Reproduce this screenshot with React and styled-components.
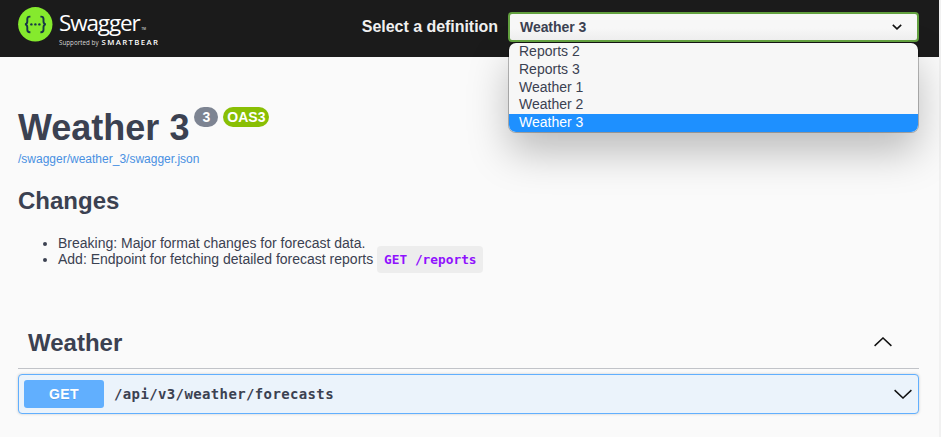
import React from 'react';
import styled, { createGlobalStyle, css } from 'styled-components';

const GlobalStyle = createGlobalStyle`
  * { box-sizing: border-box; }
  html, body { margin: 0; padding: 0; overflow: hidden; }
  body {
    background: #fafafa;
    color: #3b4151;
    font-family: 'Liberation Sans', Arial, sans-serif;
    font-size: 14px;
  }
`;

const Page = styled.div`
  height: 437px;
  background: #fafafa;
  border-right: 2px solid #f1f1f1;
`;

const Topbar = styled.header`
  display: flex;
  justify-content: space-between;
  height: 57px;
  padding: 0 20px 0 18px;
  background: #1b1b1b;
`;

const Brand = styled.a`
  display: flex;
  gap: 6px;
  padding-top: 7px;
  color: #fff;
  font-family: 'Open Sans', sans-serif;
`;

const Wordmark = styled.div`
  display: flex;
  flex-direction: column;
  padding-top: 1px;
`;

const BrandName = styled.div`
  display: flex;
  align-items: flex-end;
  height: 30px;
  font-size: 22.5px;
  line-height: 30px;
  letter-spacing: -1.15px;
`;

const Trademark = styled.span`
  font-size: 3px;
  line-height: 17px;
  letter-spacing: 0;
  margin-left: 2px;
`;

const Supported = styled.div`
  display: flex;
  align-items: baseline;
  gap: 3px;
  color: #d8d8d8;
  font-size: 6.2px;
  line-height: 9px;
  letter-spacing: 0.05px;
  white-space: nowrap;
`;

const Company = styled.span`
  color: #fff;
  font-weight: 600;
  font-size: 7.8px;
  letter-spacing: 1.35px;
`;

const Definition = styled.div`
  display: flex;
  align-items: flex-start;
  gap: 10px;
  padding-top: 12px;
`;

const DefinitionLabel = styled.span`
  color: #f0f0f0;
  font-size: 16px;
  font-weight: 700;
  line-height: 29px;
  letter-spacing: -0.04px;
`;

const Picker = styled.div`
  position: relative;
  width: 411px;
`;

const PickerField = styled.div`
  display: flex;
  align-items: center;
  justify-content: space-between;
  position: relative;
  height: 30px;
  padding: 0 15px 0 10px;
  border: 2px solid #62a03f;
  border-radius: 4px;
  background: linear-gradient(#f7f7f7 55%, #eeeeee);
  font-weight: 700;
  letter-spacing: -0.06px;
`;

const Menu = styled.div`
  position: absolute;
  top: 31px;
  left: 1px;
  width: 409px;
  height: 89px;
  border-radius: 7px;
  overflow: hidden;
  background: #f7f7f7;
`;

const MenuShadow = styled.div`
  position: absolute;
  top: 31px;
  left: 1px;
  width: 409px;
  height: 89px;
  border-radius: 7px;
  box-shadow: 0 0 0 1px rgba(0, 0, 0, 0.25), 0 20px 40px 0 rgba(0, 0, 0, 0.25);
`;

const Option = styled.div`
  height: ${(p) => p.$height}px;
  padding-left: 10px;
  line-height: ${(p) => p.$line}px;
  ${(p) => p.$active && css`
    background: #1e90ff;
    color: #fff;
  `}
`;

const Content = styled.main`
  padding: 0 20px 0 18px;
`;

const TitleRow = styled.div`
  display: flex;
  align-items: flex-start;
  padding-top: 50px;
  height: 92px;
`;

const Title = styled.h1`
  margin: 0;
  font-size: 36px;
  line-height: 41px;
`;

const Badge = styled.span`
  height: 20px;
  width: ${(p) => p.$width}px;
  margin-left: 5px;
  border-radius: 57px;
  background: ${(p) => p.$color};
  color: #fff;
  font-size: 14px;
  font-weight: 700;
  line-height: 20px;
  text-align: center;
`;

const SpecLink = styled.a`
  display: block;
  height: 20px;
  color: #4990e2;
  font-size: 12px;
  line-height: 20px;
`;

const Heading = styled.h2`
  margin: 0;
  font-size: 24px;
  line-height: 28px;
`;

const Changes = styled.section`
  padding-top: 18px;
  height: 153px;
`;

const ChangeList = styled.ul`
  margin: 20px 0 0;
  padding-left: 40px;
`;

const Change = styled.li`
  height: 16px;
  line-height: 16px;
  white-space: nowrap;
`;

const Code = styled.code`
  display: inline-block;
  width: 106px;
  height: 27px;
  margin: -6px 0 -5px;
  padding: 0 7px;
  border-radius: 4px;
  background: #ededed;
  color: #9012fe;
  font-family: 'DejaVu Sans Mono', monospace;
  font-size: 12.8px;
  font-weight: 700;
  line-height: 27px;
  vertical-align: middle;
`;

const TagHeader = styled.div`
  display: flex;
  align-items: center;
  justify-content: space-between;
  height: 47px;
  padding: 0 26px 5px 10px;
  border-bottom: 1px solid #c1c3c8;

  svg { margin-bottom: 2px; }
`;

const Operation = styled.div`
  display: flex;
  align-items: center;
  height: 40px;
  margin: 5px 0 0;
  padding: 0 5px;
  border: 1px solid #61affe;
  border-radius: 4px;
  background: #ebf3fb;
  box-shadow: 0 0 3px rgba(0, 0, 0, 0.19);
`;

const Method = styled.span`
  width: 80px;
  height: 28px;
  border-radius: 3px;
  background: #61affe;
  color: #fff;
  font-weight: 700;
  line-height: 28px;
  letter-spacing: 0.4px;
  text-align: center;
  text-shadow: 0 1px 0 rgba(0, 0, 0, 0.1);
`;

const Path = styled.span`
  flex: 1;
  padding-left: 10px;
  font-family: 'DejaVu Sans Mono', monospace;
  font-size: 14px;
  line-height: 16px;
  letter-spacing: 0.37px;
  font-weight: 700;
`;

function SwaggerLogo() {
  return (
    <svg width="35" height="35" viewBox="0 0 35 35">
      <circle cx="17.3" cy="17.3" r="17.2" fill="#85ea2d" />
      <g fill="none" stroke="#173647" strokeWidth="1.9">
        <path d="M12.4 9.6h-.7c-1.8 0-2.4.8-2.4 2.4v2.6c0 1.6-.7 2.6-2.3 2.8 1.6.2 2.3 1.2 2.3 2.8v2.6c0 1.6.6 2.4 2.4 2.4h.7" />
        <path d="M22.4 9.6h.7c1.8 0 2.4.8 2.4 2.4v2.6c0 1.6.7 2.6 2.3 2.8-1.6.2-2.3 1.2-2.3 2.8v2.6c0 1.6-.6 2.4-2.4 2.4h-.7" />
      </g>
      <g fill="#173647">
        <circle cx="13.4" cy="17.4" r="1.2" />
        <circle cx="17.4" cy="17.4" r="1.2" />
        <circle cx="21.4" cy="17.4" r="1.2" />
      </g>
    </svg>
  );
}

const arrows = {
  small: { w: 10, h: 6, d: 'M.8.9 5 4.8 9.2.9', stroke: 1.6 },
  up: { w: 20, h: 10, d: 'M1.6 8.9 10 1l8.4 7.9', stroke: 1.5 },
  down: { w: 20, h: 10, d: 'M1.6 1.1 10 9l8.4-7.9', stroke: 1.5 },
};

function Arrow({ kind }) {
  const a = arrows[kind];
  return (
    <svg width={a.w} height={a.h} viewBox={`0 0 ${a.w} ${a.h}`} fill="none">
      <path d={a.d} stroke="#111" strokeWidth={a.stroke} />
    </svg>
  );
}

const options = [
  { name: 'Reports 2', height: 17, line: 16 },
  { name: 'Reports 3', height: 18, line: 18 },
  { name: 'Weather 1', height: 18, line: 18 },
  { name: 'Weather 2', height: 18, line: 16 },
  { name: 'Weather 3', height: 18, line: 16 },
];

export default function App() {
  return (
    <>
      <GlobalStyle />
      <Page>
        <Topbar>
          <Brand>
            <SwaggerLogo />
            <Wordmark>
              <BrandName>Swagger<Trademark>TM</Trademark></BrandName>
              <Supported>Supported by <Company>SMARTBEAR</Company></Supported>
            </Wordmark>
          </Brand>
          <Definition>
            <DefinitionLabel>Select a definition</DefinitionLabel>
            <Picker>
              <MenuShadow />
              <PickerField>Weather 3<Arrow kind="small" /></PickerField>
              <Menu>
                {options.map(({ name, height, line }) => (
                  <Option key={name} $height={height} $line={line} $active={name === 'Weather 3'}>{name}</Option>
                ))}
              </Menu>
            </Picker>
          </Definition>
        </Topbar>
        <Content>
          <TitleRow>
            <Title>Weather 3</Title>
            <Badge $width={24} $color="#7d8492">3</Badge>
            <Badge $width={46} $color="#89bf04">OAS3</Badge>
          </TitleRow>
          <SpecLink>/swagger/weather_3/swagger.json</SpecLink>
          <Changes>
            <Heading>Changes</Heading>
            <ChangeList>
              <Change>Breaking: Major format changes for forecast data.</Change>
              <Change>Add: Endpoint for fetching detailed forecast reports <Code>GET /reports</Code></Change>
            </ChangeList>
          </Changes>
          <TagHeader>
            <Heading>Weather</Heading>
            <Arrow kind="up" />
          </TagHeader>
          <Operation>
            <Method>GET</Method>
            <Path>/api/v3/weather/forecasts</Path>
            <Arrow kind="down" />
          </Operation>
        </Content>
      </Page>
    </>
  );
}
